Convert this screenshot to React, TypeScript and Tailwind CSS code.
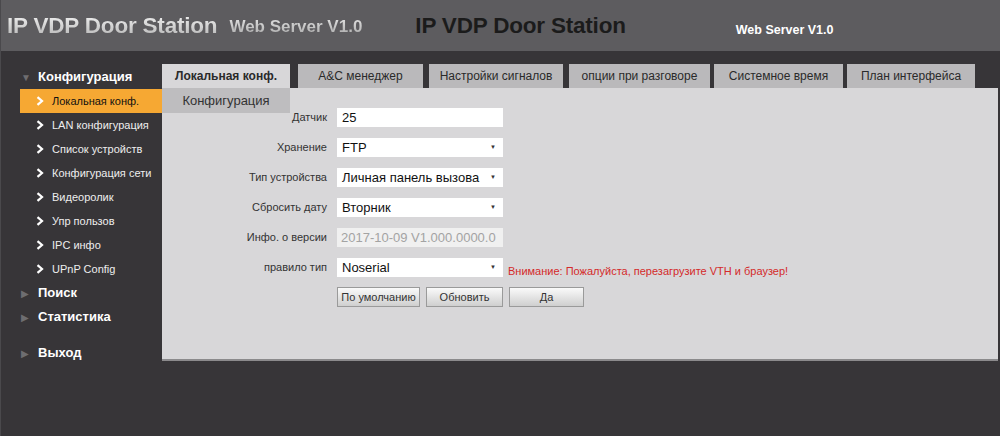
const MENU = [
  "Локальная конф.",
  "LAN конфигурация",
  "Список устройств",
  "Конфигурация сети",
  "Видеоролик",
  "Упр пользов",
  "IPC инфо",
  "UPnP Config",
];

const TABS = [
  { label: "Локальная конф.", w: "w-[128px]", mr: "mr-[8px]", active: true },
  { label: "A&C менеджер", w: "w-[125px]", mr: "mr-[6px]" },
  { label: "Настройки сигналов", w: "w-[134px]", mr: "mr-[6px]" },
  { label: "опции при разговоре", w: "w-[141px]", mr: "mr-[4px]" },
  { label: "Системное время", w: "w-[129px]", mr: "mr-[4px]" },
  { label: "План интерфейса", w: "w-[128px]", mr: "" },
];

function Chevron() {
  return (
    <svg width="8" height="10" viewBox="0 0 8 10" className="shrink-0">
      <path d="M1.5 1.2 L6 5 L1.5 8.8" fill="none" stroke="currentColor" strokeWidth="2.2" />
    </svg>
  );
}

function SectionHead({ label, open }: { label: string; open?: boolean }) {
  return (
    <div className="flex h-[24px] items-center pl-[20px]">
      <span className="w-[17px] text-[10px] text-[#6e6d70]">{open ? "▼" : "▶"}</span>
      <span className="text-[13px] font-bold text-white">{label}</span>
    </div>
  );
}

function Select({ value }: { value: string }) {
  return (
    <div className="flex h-[19px] w-[166px] items-center justify-between bg-white pl-[5px] pr-[7px] text-[13px] text-[#111]">
      <span>{value}</span>
      <span className="text-[6px] text-[#333]">▼</span>
    </div>
  );
}

function Row({ label, children }: { label: string; children: React.ReactNode }) {
  return (
    <div className="flex h-[19px] items-center">
      <div className="w-[165px] text-right text-[11px] text-[#333]">{label}</div>
      <div className="ml-[10px] flex items-center">{children}</div>
    </div>
  );
}

function Btn({ label, w }: { label: string; w: string }) {
  return (
    <button
      className={`${w} h-[20px] border border-[#9a9a9a] bg-gradient-to-b from-[#fafafa] to-[#cfcfcf] text-[11px] text-[#333]`}
    >
      {label}
    </button>
  );
}

export default function App() {
  return (
    <div className="h-[436px] w-[1000px] overflow-hidden border-l border-[#4a494c] bg-[#373538] font-['Liberation_Sans',Arial,sans-serif]">
      <header className="flex h-[51px] items-center bg-[#5d5c5f]">
        <span className="ml-[6px] mt-[1px] bg-gradient-to-b from-white to-[#a9a9a9] bg-clip-text text-[22.5px] font-bold tracking-[-0.2px] text-transparent">
          IP VDP Door Station
        </span>
        <span className="ml-[12px] mt-[3px] bg-gradient-to-b from-[#eeeeee] to-[#9e9e9e] bg-clip-text text-[17px] font-bold text-transparent">
          Web Server V1.0
        </span>
        <span className="ml-[53px] mt-[1px] text-[22.5px] font-bold tracking-[-0.2px] text-[#1b1b1b]">
          IP VDP Door Station
        </span>
        <span className="ml-[110px] mt-[10px] text-[12.5px] font-bold text-white">Web Server V1.0</span>
      </header>

      <div className="flex">
        <aside className="w-[161px] shrink-0 pt-[14px]">
          <SectionHead label="Конфигурация" open />
          {MENU.map((m, i) => (
            <div
              key={m}
              className={`ml-[19px] flex h-[24px] items-center pl-[16px] text-[11px] ${
                i === 0 ? "bg-[#f6a833] text-[#111]" : "text-[#eeeeee]"
              }`}
            >
              <span className="text-white">
                <Chevron />
              </span>
              <span className="ml-[8px]">{m}</span>
            </div>
          ))}
          <SectionHead label="Поиск" />
          <SectionHead label="Статистика" />
          <div className="mt-[12px]">
            <SectionHead label="Выход" />
          </div>
        </aside>

        <main className="mr-[2px] flex-1 pt-[13px]">
          <div className="flex h-[24px]">
            {TABS.map((t) => (
              <div
                key={t.label}
                className={`${t.w} ${t.mr} flex items-center justify-center text-[12px] text-[#2a2a2a] ${
                  t.active ? "bg-[#d8d7d9] font-bold" : "bg-[#bab9bb]"
                }`}
              >
                {t.label}
              </div>
            ))}
          </div>
          <div className="h-[273px] border-b-2 border-[#8b8a8c] bg-[#d8d7d9]">
            <div className="flex h-[25px] w-[128px] items-center justify-center bg-[#bebdbf] text-[13px] text-[#333]">
              Конфигурация
            </div>
            <div className="-mt-[5px] flex flex-col gap-[11px]">
              <Row label="Датчик">
                <div className="flex h-[19px] w-[166px] items-center bg-white pl-[5px] text-[13px] text-[#111]">25</div>
              </Row>
              <Row label="Хранение">
                <Select value="FTP" />
              </Row>
              <Row label="Тип устройства">
                <Select value="Личная панель вызова" />
              </Row>
              <Row label="Сбросить дату">
                <Select value="Вторник" />
              </Row>
              <Row label="Инфо. о версии">
                <div className="flex h-[19px] w-[166px] items-center overflow-hidden whitespace-nowrap bg-[#f0f0f0] pl-[4px] text-[13px] text-[#a3a3a3]">
                  2017-10-09 V1.000.0000.0
                </div>
              </Row>
              <Row label="правило тип">
                <Select value="Noserial" />
                <span className="ml-[5px] mt-[7px] whitespace-nowrap text-[11px] text-[#d42a2a]">
                  Внимание: Пожалуйста, перезагрузите VTH и браузер!
                </span>
              </Row>
              <div className="-mt-[1px] ml-[175px] flex h-[20px] gap-[6px]">
                <Btn label="По умолчанию" w="w-[83px]" />
                <Btn label="Обновить" w="w-[77px]" />
                <Btn label="Да" w="w-[75px]" />
              </div>
            </div>
          </div>
        </main>
      </div>
    </div>
  );
}
